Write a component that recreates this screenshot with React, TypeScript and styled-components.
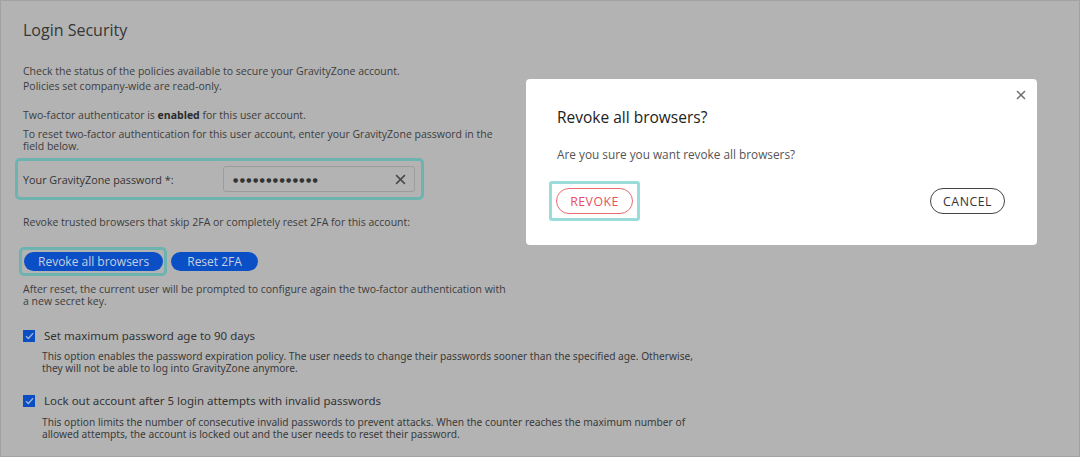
import React from "react";
import styled, { createGlobalStyle } from "styled-components";

const GlobalStyle = createGlobalStyle`
  html, body { margin: 0; padding: 0; }
  body { width: 1080px; height: 457px; overflow: hidden; background: #b3b3b3; }
  * { box-sizing: border-box; }
`;

const Page = styled.div`
  width: 1080px;
  height: 457px;
  border: 1px solid #a2a2a2;
  background: #b3b3b3;
  padding: 17px 22px;
  font-family: "Open Sans", "Liberation Sans", sans-serif;
  color: #3b3b3b;
`;

const Title = styled.h1`
  margin: 0;
  font-size: 16px;
  font-weight: 400;
  line-height: 24px;
  color: #363636;
`;

const Text = styled.p<{ $mt?: number; $lh?: number; $max?: number }>`
  margin: ${(p) => p.$mt ?? 0}px 0 0;
  font-size: 10.5px;
  line-height: ${(p) => p.$lh ?? 12}px;
  color: #3d3d3d;
  max-width: ${(p) => (p.$max ? `${p.$max}px` : "none")};
  b { font-weight: 700; color: #2a2a2a; }
`;

const Highlight = styled.div`
  border: 3px solid #6db4b1;
  border-radius: 5px;
`;

const FieldBox = styled(Highlight)`
  margin: 6px 0 0 -8px;
  width: 409px;
  height: 42px;
  display: flex;
  align-items: center;
  justify-content: space-between;
  padding: 0 6px 0 5px;
`;

const FieldLabel = styled.span`
  font-size: 10.8px;
  color: #333;
`;

const Input = styled.div`
  width: 192px;
  height: 26px;
  border: 1px solid #9c9c9c;
  border-radius: 3px;
  display: flex;
  align-items: center;
  justify-content: space-between;
  padding: 0 8px 0 9px;
  color: #333;
`;

const Dots = styled.span`
  font-family: "DejaVu Sans", sans-serif;
  font-size: 6px;
  letter-spacing: 1.4px;
`;

const ClearIcon = styled.svg`
  width: 11px;
  height: 11px;
  stroke: #4a4a4a;
  stroke-width: 1.4;
`;

const ButtonRow = styled.div`
  margin: 19px 0 0 -4px;
  display: flex;
  align-items: center;
  gap: 4px;
`;

const ButtonFocus = styled(Highlight)`
  padding: 2px 1px 2px 2px;
`;

const PrimaryButton = styled.button<{ $px: number }>`
  height: 19px;
  border: none;
  border-radius: 10px;
  background: #0a4fc6;
  color: #c6cfe2;
  font-family: inherit;
  font-size: 12px;
  padding: 0 ${(p) => p.$px}px;
  display: flex;
  align-items: center;
`;

const CheckRow = styled.div<{ $mt: number }>`
  margin-top: ${(p) => p.$mt}px;
  display: flex;
  align-items: center;
  gap: 9px;
  font-family: "Noto Sans", sans-serif;
  font-size: 11.5px;
  line-height: 16px;
  color: #333;
`;

const CheckBox = styled.span`
  width: 12px;
  height: 12px;
  background: #0b4dc2;
  display: flex;
  align-items: center;
  justify-content: center;
`;

const CheckDesc = styled.p<{ $mt: number }>`
  margin: ${(p) => p.$mt}px 0 0 19px;
  font-family: "Noto Sans", sans-serif;
  font-size: 10.2px;
  line-height: 12px;
  color: #3a3a3a;
  max-width: 660px;
`;

const Backdrop = styled.div`
  position: fixed;
  inset: 0;
  pointer-events: none;
`;

const Modal = styled.div`
  position: absolute;
  left: 526px;
  top: 79px;
  width: 511px;
  height: 166px;
  background: #fff;
  border-radius: 4px;
  padding: 28px 32px 0 31px;
  font-family: "Open Sans", "Liberation Sans", sans-serif;
  pointer-events: auto;
`;

const CloseIcon = styled.svg`
  position: absolute;
  right: 11px;
  top: 11px;
  width: 10px;
  height: 10px;
  stroke: #6e6e6e;
  stroke-width: 1.5;
`;

const ModalTitle = styled.h2`
  margin: 0;
  font-size: 15.5px;
  font-weight: 400;
  line-height: 20px;
  color: #222;
`;

const ModalText = styled.p`
  margin: 20px 0 0;
  font-size: 11.8px;
  line-height: 15px;
  color: #555;
`;

const ModalActions = styled.div`
  margin: 19px 0 0 -8px;
  display: flex;
  align-items: center;
  justify-content: space-between;
`;

const ModalFocus = styled.div`
  border: 3px solid #9adcd9;
  border-radius: 3px;
  padding: 4px;
`;

const OutlineButton = styled.button<{ $tone: "danger" | "neutral"; $w: number }>`
  width: ${(p) => p.$w}px;
  height: 26px;
  border-radius: 13px;
  background: #fff;
  border: 1px solid ${(p) => (p.$tone === "danger" ? "#ec6a72" : "#444")};
  color: ${(p) => (p.$tone === "danger" ? "#e8505b" : "#333")};
  font-family: inherit;
  font-size: 12.3px;
  letter-spacing: 0.5px;
  padding: 0;
  display: flex;
  align-items: center;
  justify-content: center;
`;

const Check = () => (
  <CheckBox>
    <svg width="9" height="8" viewBox="0 0 9 8">
      <path d="M1 4.2 L3.4 6.5 L8 1.2" fill="none" stroke="#9fb6df" strokeWidth="1.3" />
    </svg>
  </CheckBox>
);

export default function App() {
  return (
    <>
      <GlobalStyle />
      <Page>
        <Title>Login Security</Title>
        <Text $mt={22} $lh={15}>
          Check the status of the policies available to secure your GravityZone account.
        </Text>
        <Text $lh={15}>Policies set company-wide are read-only.</Text>
        <Text $mt={14} $lh={15}>
          Two-factor authenticator is <b>enabled</b> for this user account.
        </Text>
        <Text $mt={5} $max={490}>
          To reset two-factor authentication for this user account, enter your GravityZone password in the field below.
        </Text>
        <FieldBox>
          <FieldLabel>Your GravityZone password *:</FieldLabel>
          <Input>
            <Dots>●●●●●●●●●●●●●</Dots>
            <ClearIcon viewBox="0 0 10 10">
              <path d="M1 1 L9 9 M9 1 L1 9" />
            </ClearIcon>
          </Input>
        </FieldBox>
        <Text $mt={16}>Revoke trusted browsers that skip 2FA or completely reset 2FA for this account:</Text>
        <ButtonRow>
          <ButtonFocus>
            <PrimaryButton $px={14}>Revoke all browsers</PrimaryButton>
          </ButtonFocus>
          <PrimaryButton $px={16}>Reset 2FA</PrimaryButton>
        </ButtonRow>
        <Text $mt={7} $max={490}>
          After reset, the current user will be prompted to configure again the two-factor authentication with a new secret key.
        </Text>
        <CheckRow $mt={21}>
          <Check />
          Set maximum password age to 90 days
        </CheckRow>
        <CheckDesc $mt={6}>
          This option enables the password expiration policy. The user needs to change their passwords sooner than the specified age. Otherwise, they will not be able to log into GravityZone anymore.
        </CheckDesc>
        <CheckRow $mt={19}>
          <Check />
          Lock out account after 5 login attempts with invalid passwords
        </CheckRow>
        <CheckDesc $mt={7}>
          This option limits the number of consecutive invalid passwords to prevent attacks. When the counter reaches the maximum number of allowed attempts, the account is locked out and the user needs to reset their password.
        </CheckDesc>
      </Page>
      <Backdrop>
        <Modal role="dialog">
          <CloseIcon viewBox="0 0 10 10">
            <path d="M1 1 L9 9 M9 1 L1 9" />
          </CloseIcon>
          <ModalTitle>Revoke all browsers?</ModalTitle>
          <ModalText>Are you sure you want revoke all browsers?</ModalText>
          <ModalActions>
            <ModalFocus>
              <OutlineButton $tone="danger" $w={77}>REVOKE</OutlineButton>
            </ModalFocus>
            <OutlineButton $tone="neutral" $w={75}>CANCEL</OutlineButton>
          </ModalActions>
        </Modal>
      </Backdrop>
    </>
  );
}
